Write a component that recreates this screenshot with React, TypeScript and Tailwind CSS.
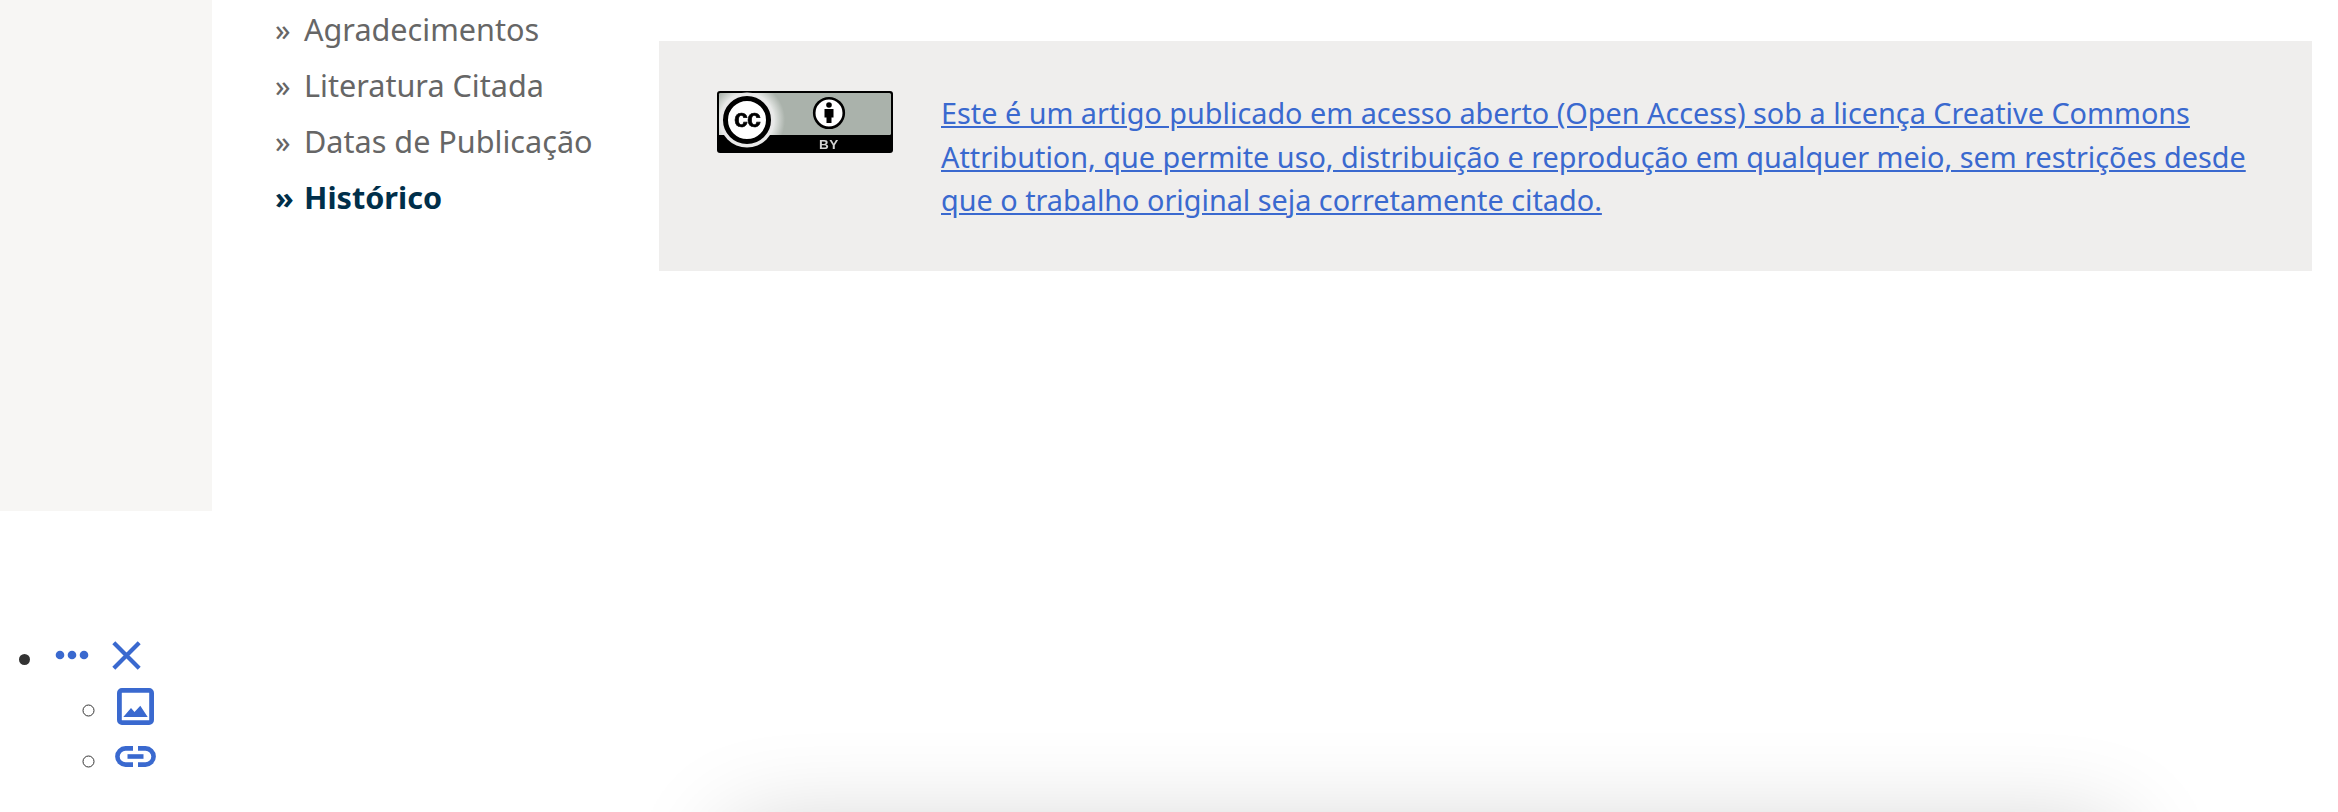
const navItems = ["Agradecimentos", "Literatura Citada", "Datas de Publicação"];

function CcBadge() {
  return (
    <svg width="176" height="62" viewBox="0 0 176 62" className="block shrink-0 blur-[0.4px]">
      <defs>
        <radialGradient id="halo" cx="30" cy="29" r="38" gradientUnits="userSpaceOnUse">
          <stop offset="0.65" stopColor="#f2f3f2" />
          <stop offset="1" stopColor="#aab2ab" />
        </radialGradient>
      </defs>
      <rect x="0" y="0" width="176" height="62" rx="3" fill="#000" />
      <rect x="2" y="2" width="172" height="42" rx="1.5" fill="#aab2ab" />
      <path d="M2 3.5 A1.5 1.5 0 0 1 3.5 2 H70 V44 H2 Z" fill="url(#halo)" />
      <circle cx="30" cy="29" r="27.5" fill="#e8e8e8" />
      <circle cx="30" cy="29" r="21.5" fill="#fff" stroke="#000" strokeWidth="5" />
      <text x="30" y="36" textAnchor="middle" fontFamily="'Liberation Sans', sans-serif" fontWeight="700" fontSize="25" letterSpacing="-1" fill="#000" stroke="#000" strokeWidth="0.6">cc</text>
      <circle cx="112" cy="22" r="14.8" fill="#fff" stroke="#000" strokeWidth="2.6" />
      <circle cx="112" cy="14" r="2.8" fill="#000" />
      <path d="M107.5 18 H116.5 V26.5 H114.5 V32 H109.5 V26.5 H107.5 Z" fill="#000" />
      <text x="112" y="58" textAnchor="middle" fontFamily="'Liberation Sans', sans-serif" fontWeight="700" fontSize="13.5" letterSpacing="0.6" fill="#d4d4d4">BY</text>
    </svg>
  );
}

function Dots() {
  return (
    <svg width="34" height="10" viewBox="0 0 34 10" className="block" fill="#3a69cf">
      <circle cx="5" cy="5" r="4.3" />
      <circle cx="17" cy="5" r="4.3" />
      <circle cx="29" cy="5" r="4.3" />
    </svg>
  );
}

function Cross() {
  return (
    <svg width="29" height="29" viewBox="0 0 29 29" className="block" fill="none" stroke="#3a69cf" strokeWidth="4.2">
      <path d="M1.8 1.8 L27.2 27.2 M27.2 1.8 L1.8 27.2" />
    </svg>
  );
}

function ImageIcon() {
  return (
    <svg width="37" height="37" viewBox="0 0 37 37" className="ml-[5px] inline-block align-[-3px]">
      <rect x="2.4" y="2.4" width="32.2" height="32.2" rx="2.5" fill="none" stroke="#3a69cf" strokeWidth="4.8" />
      <path d="M6.3 29 L14 20 L17.5 24 L23.3 17.7 L30.7 29 Z" fill="#3a69cf" />
    </svg>
  );
}

function LinkIcon() {
  return (
    <svg width="41" height="21" viewBox="0 0 41 21" className="ml-[3px] inline-block align-[6px]" fill="none" stroke="#3a69cf" strokeWidth="4.6">
      <path d="M18 2.4 H10.5 A8.1 8.1 0 0 0 10.5 18.6 H18" />
      <path d="M23 2.4 H30.5 A8.1 8.1 0 0 1 30.5 18.6 H23" />
      <path d="M12.5 10.5 H28.5" />
    </svg>
  );
}

export default function App() {
  return (
    <div className="h-[812px] w-[2338px] overflow-hidden bg-white font-['Noto_Sans',sans-serif] text-[#333]">
      <div className="flex h-[511px] items-start">
        <div className="h-full w-[212px] bg-[#f7f6f4]" />
        <ul className="mt-[1px] w-[447px] pl-[63px] text-[30.6px] leading-[56px] text-[#666]">
          {navItems.map((t) => (
            <li key={t} className="flex">
              <span className="w-[29px] shrink-0">»</span>
              <span>{t}</span>
            </li>
          ))}
          <li className="flex font-bold text-[#002f4a]">
            <span className="w-[29px] shrink-0">»</span>
            <span>Histórico</span>
          </li>
        </ul>
        <div className="mt-[41px] flex h-[230px] w-[1653px] gap-[48px] bg-[#efeeed] pl-[58px] pr-[40px] pt-[50px]">
          <CcBadge />
          <a href="#" className="block text-[28.8px] leading-[43.5px] text-[#3a69cf] underline">
            Este é um artigo publicado em acesso aberto (Open Access) sob a licença Creative Commons Attribution, que permite uso, distribuição e reprodução em qualquer meio, sem restrições desde que o trabalho original seja corretamente citado.
          </a>
        </div>
      </div>
      <div className="h-[319px] pt-[127px]">
        <ul className="list-disc pl-[48px] text-[30.6px] leading-[42px]">
          <li>
            <span className="inline-flex h-[30px] items-center gap-[23px] pl-[7px] align-[11px]">
              <Dots />
              <Cross />
            </span>
            <ul className="mt-[5px] list-[circle] pl-[64px] leading-[51px]">
              <li><ImageIcon /></li>
              <li><LinkIcon /></li>
            </ul>
          </li>
        </ul>
      </div>
      <div className="ml-[730px] h-[200px] w-[1390px] shadow-[0_0_100px_rgba(0,0,0,0.2)]" />
    </div>
  );
}
